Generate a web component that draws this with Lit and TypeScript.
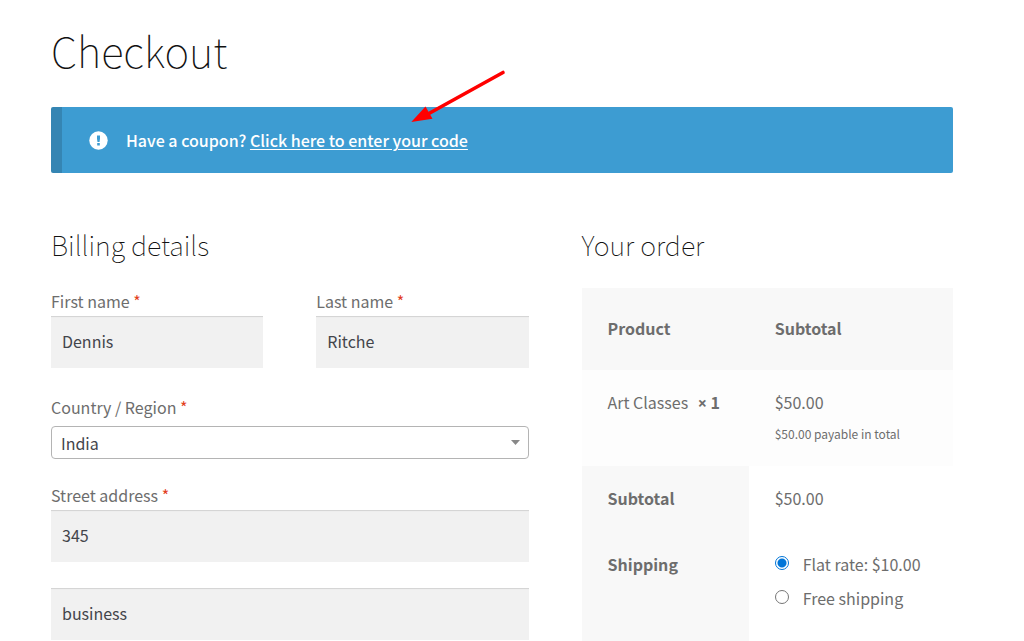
import { LitElement, html, css, nothing } from "lit";
import { customElement, property, state } from "lit/decorators.js";

const fonts = css`"Noto Sans CJK SC", "Noto Sans CJK JP", "Open Sans", sans-serif`;

@customElement("coupon-notice")
class CouponNotice extends LitElement {
  static styles = css`
    :host {
      display: block;
      position: relative;
    }
    .notice {
      display: flex;
      align-items: center;
      gap: 18px;
      padding: 19px 35px 19px 27px;
      border-left: 11px solid #3585b3;
      border-radius: 2px;
      background: #3d9cd2;
      color: #fff;
      font-weight: 500;
      line-height: 28px;
    }
    .icon {
      width: 19px;
      height: 19px;
      flex: none;
    }
    .link {
      color: #fff;
      text-decoration: underline;
      text-decoration-thickness: 1px;
      text-underline-offset: 2px;
    }
    .arrow {
      position: absolute;
      left: 359px;
      top: -38px;
      width: 96px;
      height: 56px;
      pointer-events: none;
    }
  `;
  render() {
    return html`
      <div class="notice">
        <svg class="icon" viewBox="0 0 19 19" aria-hidden="true">
          <circle cx="9.5" cy="9.5" r="9.2" fill="#fff" />
          <path d="M8 4.500h3v3.200l-.5 3.300h-2L8 7.700zM8.200 12h2.600v2.600H8.200z" fill="#3d9cd2" />
        </svg>
        <span>Have a coupon? <a class="link" href="#coupon">Click here to enter your code</a></span>
      </div>
      <svg class="arrow" viewBox="0 0 96 56" aria-hidden="true">
        <path d="M93 3.500 18 45" stroke="#f00" stroke-width="3.600" stroke-linecap="round" />
        <path d="M1.300 53 15.500 37.500l7 12.300z" fill="#f00" />
      </svg>
    `;
  }
}

@customElement("text-field")
class TextField extends LitElement {
  @property() label = "";
  @property() value = "";
  @property({ type: Boolean }) unlabelled = false;

  static styles = css`
    :host {
      display: block;
      min-width: 0;
    }
    .label {
      display: block;
      padding-bottom: 2px;
      line-height: 26px;
    }
    .required {
      color: #e2401c;
    }
    .input {
      display: block;
      box-sizing: border-box;
      width: 100%;
      height: 52px;
      padding: 0 11px 2px;
      border: 0;
      border-radius: 0;
      background: #f1f1f1;
      box-shadow: inset 0 2px 1px -1px rgba(0, 0, 0, 0.13);
      color: #43454b;
      font: inherit;
    }
  `;
  render() {
    return html`
      ${this.unlabelled
        ? nothing
        : html`<label class="label" for="box">${this.label} <span class="required">*</span></label>`}
      <input
        class="input"
        id="box"
        type="text"
        aria-label=${this.unlabelled ? this.label : nothing}
        .value=${this.value}
      />
    `;
  }
}

@customElement("billing-form")
class BillingForm extends LitElement {
  static styles = css`
    :host {
      display: block;
    }
    .form {
      display: flex;
      flex-direction: column;
      gap: 26px;
    }
    .pair {
      display: grid;
      grid-template-columns: 1fr 1fr;
      gap: 53px;
    }
    .group {
      display: flex;
      flex-direction: column;
      gap: 23px;
    }
    .label {
      display: block;
      padding-bottom: 6px;
      line-height: 26px;
    }
    .required {
      color: #e2401c;
    }
    .picker {
      display: grid;
      align-items: center;
    }
    .select,
    .caret {
      grid-area: 1 / 1;
    }
    .select {
      appearance: none;
      box-sizing: border-box;
      width: 100%;
      height: 33px;
      padding: 0 28px 0 9px;
      border: 1px solid #b4b4b4;
      border-radius: 4px;
      background: #fff;
      color: #43454b;
      font: inherit;
    }
    .caret {
      justify-self: end;
      width: 9px;
      height: 5px;
      margin-right: 9px;
      pointer-events: none;
    }
  `;
  render() {
    return html`
      <form class="form">
        <div class="pair">
          <text-field label="First name" value="Dennis"></text-field>
          <text-field label="Last name" value="Ritche"></text-field>
        </div>
        <div class="group">
          <div>
            <label class="label" for="country">Country / Region <span class="required">*</span></label>
            <div class="picker">
              <select class="select" id="country">
                <option selected>India</option>
              </select>
              <svg class="caret" viewBox="0 0 9 5" aria-hidden="true"><path d="M0 0h9L4.500 5z" fill="#888" /></svg>
            </div>
          </div>
          <text-field label="Street address" value="345"></text-field>
        </div>
        <text-field unlabelled label="Apartment, suite, unit" value="business"></text-field>
      </form>
    `;
  }
}

@customElement("order-review")
class OrderReview extends LitElement {
  @state() shipping = "flat";
  private rates = [
    { id: "flat", text: "Flat rate: $10.00" },
    { id: "free", text: "Free shipping" },
  ];

  static styles = css`
    :host {
      display: block;
    }
    .table {
      width: 100%;
      table-layout: fixed;
      border-collapse: collapse;
      line-height: 26px;
    }
    .name {
      width: 45%;
    }
    .cell {
      padding: 19px 26px 21px;
      text-align: left;
      vertical-align: top;
      font-weight: 400;
    }
    .cell.head {
      padding-block: 27px 29px;
    }
    .cell.head,
    .cell.side {
      background: #f8f8f8;
      font-weight: 700;
    }
    .cell.item {
      background: #fdfdfd;
    }
    .note {
      display: block;
      margin-top: 7px;
      font-size: 12px;
      line-height: 23px;
    }
    .qty {
      font-weight: 700;
      margin-left: 6px;
    }
    .times {
      font-family: "Open Sans", sans-serif;
    }
    .rates {
      display: flex;
      flex-direction: column;
      gap: 8px;
      margin: 0;
      padding: 0 0 9px;
      list-style: none;
    }
    .rate {
      display: flex;
      align-items: center;
      gap: 14px;
    }
    .radio {
      appearance: none;
      box-sizing: border-box;
      flex: none;
      width: 14px;
      height: 14px;
      margin: 0 0 3px;
      border: 1px solid #767676;
      border-radius: 50%;
      background: #fff;
    }
    .radio:checked {
      border-color: #0075d8;
      background: radial-gradient(circle, #0075d8 4px, #fff 5px);
    }
  `;
  render() {
    return html`
      <table class="table">
        <colgroup>
          <col class="name" />
          <col />
        </colgroup>
        <thead>
          <tr>
            <th class="cell head">Product</th>
            <th class="cell head">Subtotal</th>
          </tr>
        </thead>
        <tbody>
          <tr>
            <td class="cell item">Art Classes <span class="qty"><span class="times">×</span> 1</span></td>
            <td class="cell item">$50.00<small class="note">$50.00 payable in total</small></td>
          </tr>
          <tr>
            <th class="cell side">Subtotal</th>
            <td class="cell">$50.00</td>
          </tr>
          <tr>
            <th class="cell side">Shipping</th>
            <td class="cell">
              <ul class="rates">
                ${this.rates.map(
                  (r) => html`<li class="rate">
                    <input
                      class="radio"
                      type="radio"
                      name="shipping"
                      id=${r.id}
                      .checked=${this.shipping === r.id}
                      @change=${() => (this.shipping = r.id)}
                    />
                    <label for=${r.id}>${r.text}</label>
                  </li>`
                )}
              </ul>
            </td>
          </tr>
        </tbody>
      </table>
    `;
  }
}

@customElement("app-root")
class AppRoot extends LitElement {
  static styles = css`
    :host {
      display: block;
      padding: 18px 71px 0 51px;
      background: #fff;
      color: #6d6d6d;
      font-family: ${fonts};
      font-size: 16px;
    }
    .title {
      margin: 0 0 25px;
      color: #111;
      font-size: 42px;
      font-weight: 100;
      line-height: 64px;
    }
    .columns {
      display: grid;
      grid-template-columns: 9fr 7fr;
      gap: 53px;
      margin-top: 52px;
    }
    .heading {
      margin: 0 0 23px;
      color: #111;
      font-size: 27px;
      font-weight: 100;
      line-height: 40px;
    }
  `;
  render() {
    return html`
      <h1 class="title">Checkout</h1>
      <coupon-notice></coupon-notice>
      <main class="columns">
        <section>
          <h2 class="heading">Billing details</h2>
          <billing-form></billing-form>
        </section>
        <section>
          <h2 class="heading">Your order</h2>
          <order-review></order-review>
        </section>
      </main>
    `;
  }
}
